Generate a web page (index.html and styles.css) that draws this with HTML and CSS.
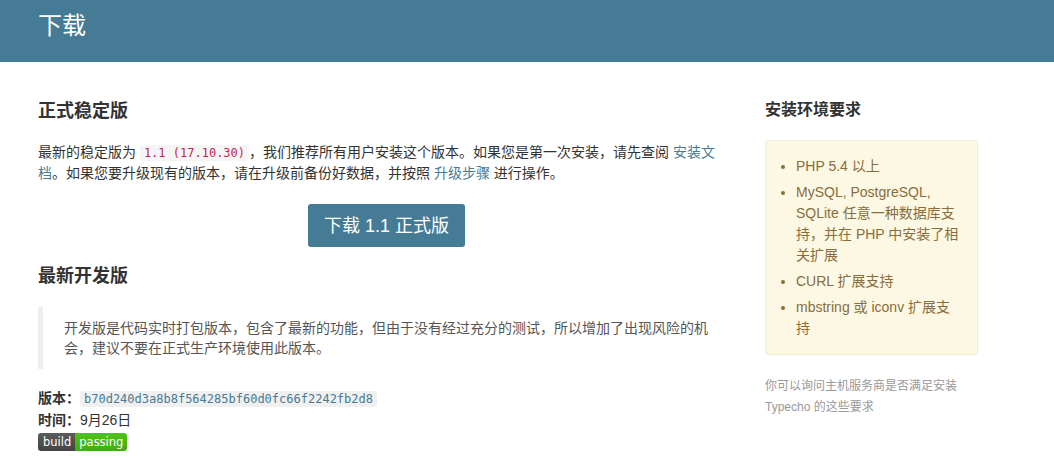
FILE: index.html
```html
<!DOCTYPE html>
<html lang="zh-CN">
<head>
    <meta charset="UTF-8">
    <title>下载 - Typecho</title>
    <link rel="stylesheet" href="styles.css">
</head>
<body>
    <div class="masthead">
        <div class="container">
            <h1>下载</h1>
        </div>
    </div>

    <div class="container main">
        <div class="content">
            <h2>正式稳定版</h2>
            <p>最新的稳定版为 <code>1.1 (17.10.30)</code>，我们推荐所有用户安装这个版本。如果您是第一次安装，请先查阅 <a href="#">安装文档</a>。如果您要升级现有的版本，请在升级前备份好数据，并按照 <a href="#">升级步骤</a> 进行操作。</p>
            <div class="download">
                <a class="btn" href="#">下载 1.1 正式版</a>
            </div>

            <h2>最新开发版</h2>
            <blockquote>开发版是代码实时打包版本，包含了最新的功能，但由于没有经过充分的测试，所以增加了出现风险的机会，建议不要在正式生产环境使用此版本。</blockquote>

            <div class="meta">
                <div><strong>版本：</strong><code class="hash">b70d240d3a8b8f564285bf60d0fc66f2242fb2d8</code></div>
                <div><strong>时间：</strong>9月26日</div>
                <div class="badge"><span class="badge-left">build</span><span class="badge-right">passing</span></div>
            </div>
        </div>

        <div class="sidebar">
            <h3>安装环境要求</h3>
            <div class="notice">
                <ul>
                    <li>PHP 5.4 以上</li>
                    <li>MySQL, PostgreSQL, SQLite 任意一种数据库支持，并在 PHP 中安装了相关扩展</li>
                    <li>CURL 扩展支持</li>
                    <li>mbstring 或 iconv 扩展支持</li>
                </ul>
            </div>
            <p class="note">你可以询问主机服务商是否满足安装 Typecho 的这些要求</p>
        </div>
    </div>
</body>
</html>
```

FILE: styles.css
```css
body { font-family: "Liberation Sans", Arial, "Noto Sans CJK SC", sans-serif; font-size: 14px; line-height: 20px; color: #333; margin: 0; background: #fff; }
a { color: #467b96; text-decoration: none; }
.container { width: 978px; margin: 0 auto; }

.masthead { background-color: #467b96; height: 62px; }
.masthead h1 { margin: 0; color: #fff; font-size: 24px; font-weight: normal; line-height: 52px; }

.main { display: flex; padding-top: 37px; }
.content { width: 697px; }
.sidebar { width: 213px; margin-left: 30px; }

h2 { font-size: 18px; font-weight: bold; margin: 0 0 19px; line-height: 24px; }
.content p { margin: 0 0 21px; }

code { font-family: "DejaVu Sans Mono", "Liberation Mono", monospace; font-size: 12px; padding: 1px 4px; color: #c7254e; background-color: #f5f5f5; border-radius: 3px; }

.download { text-align: center; margin-bottom: 17px; }
.btn { display: inline-block; background-color: #467b96; color: #fff; font-size: 18px; line-height: 24px; padding: 10px 16px 9px; border-radius: 3px; }

blockquote { margin: 0 0 19px; padding: 11px 12px 11px 21px; border-left: 5px solid #eee; color: #555; }

.meta { line-height: 21px; }
.meta strong { font-weight: bold; }
.hash { color: #467b96; background-color: #f0f0f0; font-size: 12px; padding: 1px 4px; }
.badge { display: inline-flex; margin-top: 2px; font-family: "DejaVu Sans", Verdana, sans-serif; font-size: 11.5px; line-height: 18px; color: #fff; border-radius: 3px; overflow: hidden; }
.badge-left { background: linear-gradient(#5b5b5b, #444); padding: 0 4px 0 5px; }
.badge-right { background: linear-gradient(#4fc21c, #3eae0e); padding: 0 4px; }

h3 { font-size: 16px; font-weight: bold; margin: 0 0 19px; line-height: 22px; }
.notice { background-color: #fcf8e3; border: 1px solid #faebcc; border-radius: 3px; color: #8a6d3b; padding: 15px 18px 15px 12px; line-height: 21px; }
.notice ul { margin: 0; padding-left: 18px; }
.notice li { margin-bottom: 5px; }
.notice li:last-child { margin-bottom: 0; }
.note { color: #999; font-size: 12px; line-height: 21px; margin: 21px 0 0; }
```
